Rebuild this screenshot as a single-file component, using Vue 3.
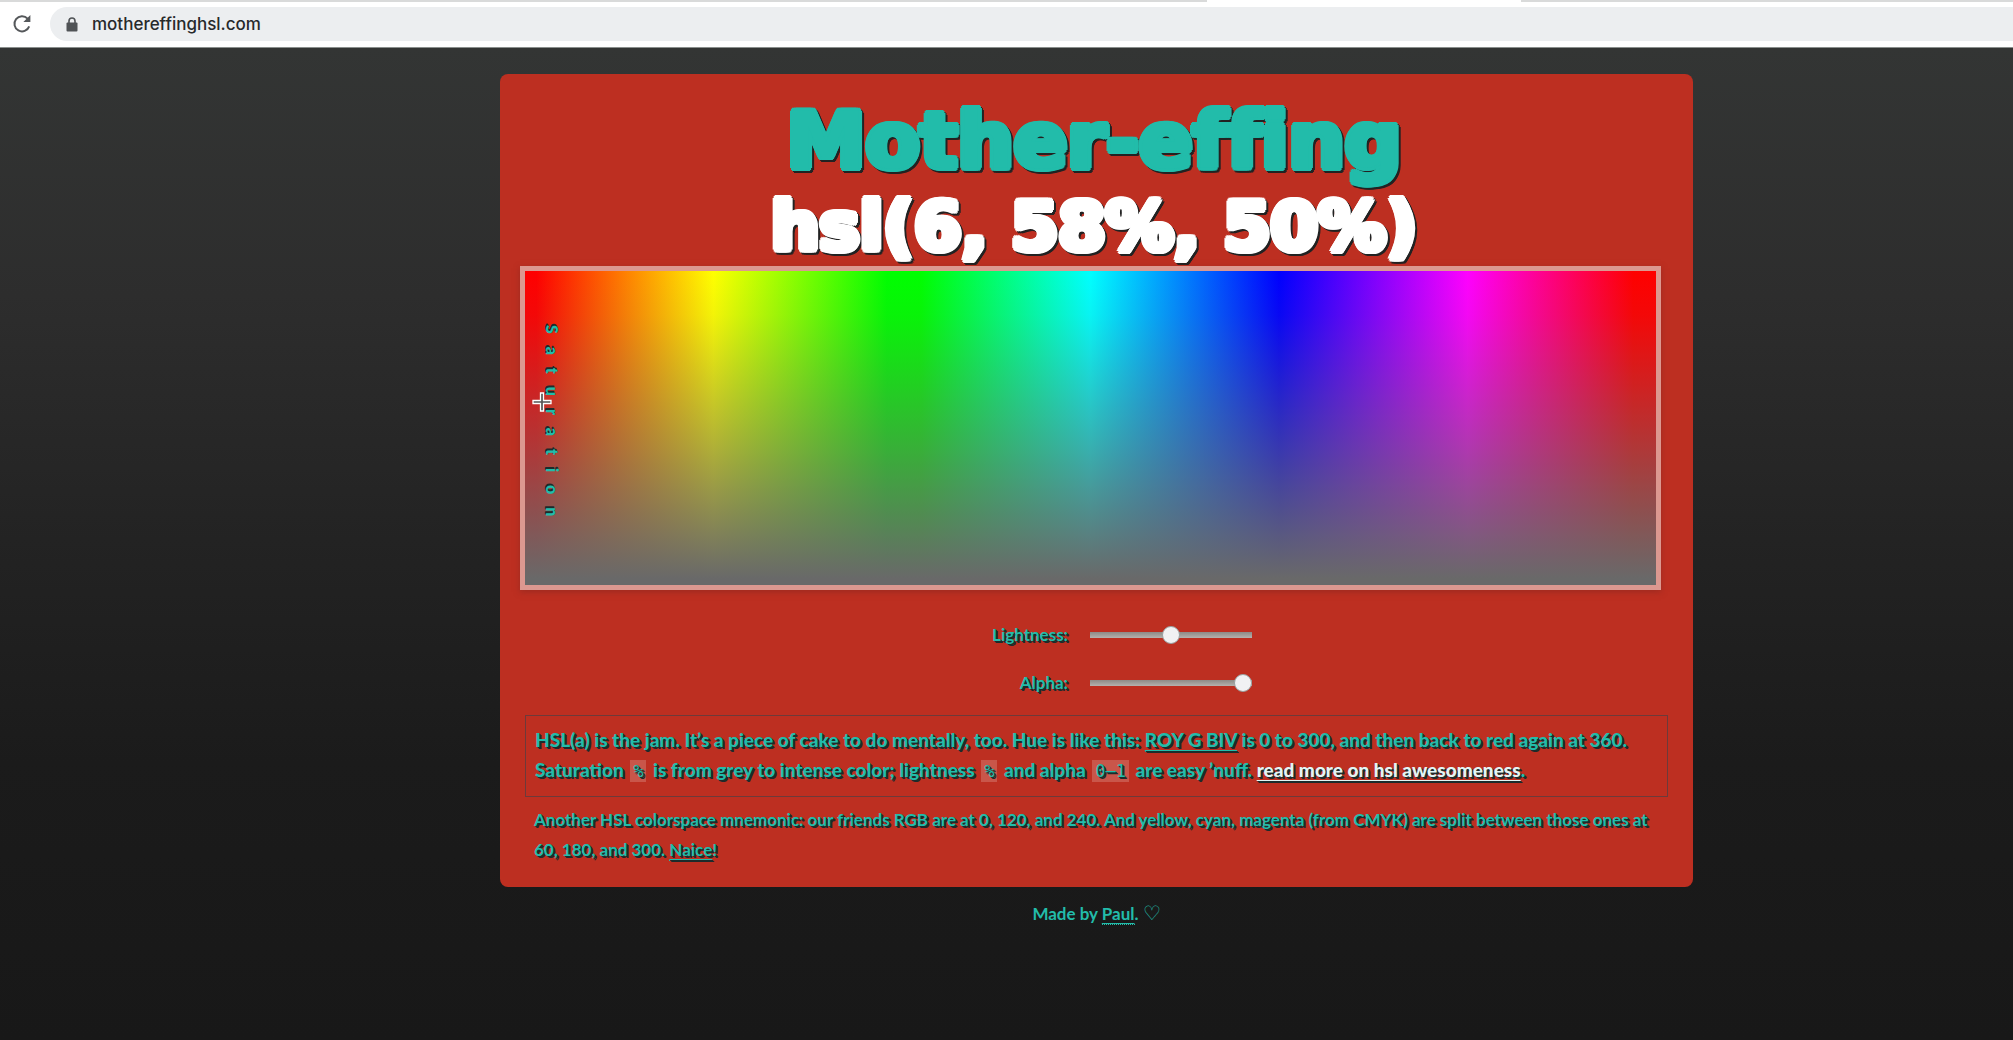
<script setup>
import { ref } from 'vue'

const lightness = ref(50)
const alpha = ref(100)
</script>

<template>
  <div class="window">
    <header class="toolbar">
      <div class="tabs"><span></span><span class="active"></span><span></span></div>
      <div class="nav">
        <button class="reload" type="button" aria-label="Reload">
          <svg width="20" height="20" viewBox="0 0 20 20" fill="none" stroke="#55585b" stroke-width="2">
            <path d="M17.2 12.4A7.6 7.6 0 1 1 15.6 4.6L17 6" />
            <path d="M18.4 1v7h-7z" fill="#55585b" stroke="none" />
          </svg>
        </button>
        <label class="address">
          <svg width="12" height="15" viewBox="0 0 12 15">
            <path d="M3 6V4a3 3 0 0 1 6 0v2" fill="none" stroke="#505356" stroke-width="1.6" />
            <rect x="0.5" y="5.5" width="11" height="9" rx="1" fill="#505356" />
          </svg>
          <input type="text" value="mothereffinghsl.com" aria-label="Address" />
        </label>
      </div>
    </header>

    <div class="page">
      <main class="card">
        <h1><span class="brand">Mother-effing</span><span class="value">hsl(6, 58%, 50%)</span></h1>

        <div class="picker">
          <span class="saturation">Saturation</span>
          <svg class="cross" width="20" height="20" viewBox="0 0 20 20">
            <path d="M8.5 1h3v7.500h7.500v3h-7.500V19h-3v-7.500H1v-3h7.500z" fill="#555" stroke="#fff" stroke-width="1.300" />
          </svg>
        </div>

        <form class="sliders">
          <label for="lightness">Lightness:</label>
          <input id="lightness" v-model="lightness" type="range" min="0" max="100" />
          <label for="alpha">Alpha:</label>
          <input id="alpha" v-model="alpha" type="range" min="0" max="100" />
        </form>

        <p class="jam">
          HSL(a) is the jam. It’s a piece of cake to do mentally, too. Hue is like this: <a class="dotted" href="#">ROY G BIV</a> is 0 to 300, and then back to red again at 360.<br />
          Saturation <code>%</code> is from grey to intense color; lightness <code>%</code> and alpha <code>0–1</code> are easy ’nuff. <a class="more" href="#">read more on hsl awesomeness</a>.
        </p>
        <p class="mnemonic">
          Another HSL colorspace mnemonic: our friends RGB are at 0, 120, and 240. And yellow, cyan, magenta (from CMYK) are split between those ones at<br />
          60, 180, and 300. <a class="dotted" href="#">Naice</a>!
        </p>
      </main>
      <footer>Made by <a class="dotted" href="#">Paul</a>. <span class="heart">♡</span></footer>
    </div>
  </div>
</template>

<style>
body {
  margin: 0;
}
</style>

<style scoped>
.window {
  min-height: 100vh;
  display: flex;
  flex-direction: column;
  overflow: hidden;
  color: #22bcaa;
  font-family: "Lato", sans-serif;
  font-weight: 700;
}
.toolbar {
  background: #fff;
  border-bottom: 1px solid #8a8f8d;
}
.tabs {
  display: grid;
  grid-template-columns: 1207fr 314fr 492fr;
  height: 2px;
}
.tabs span {
  background: #d9dada;
}
.tabs .active {
  background: #fff;
}
.nav {
  display: flex;
  align-items: center;
  gap: 18px;
  padding: 5px 0 6px 12px;
}
.reload {
  display: flex;
  padding: 0;
  border: 0;
  background: none;
}
.address {
  flex: 1;
  display: flex;
  align-items: center;
  gap: 14px;
  height: 34px;
  padding-left: 16px;
  background: #eceef0;
  border-radius: 17px 0 0 17px;
}
.address input {
  flex: 1;
  padding: 0;
  border: 0;
  outline: 0;
  background: none;
  color: #27292b;
  font: 500 17px "Inter", sans-serif;
}
.page {
  flex: 1;
  display: grid;
  grid-template-columns: 500fr 1193fr 320fr;
  align-content: start;
  padding-top: 26px;
  background: linear-gradient(#333534, #2d2d2d 25%, #222222 52%, #1b1b1b 72%, #181818);
}
.card {
  grid-column: 2;
  box-sizing: border-box;
  padding: 24px 25px 22px 20px;
  background: #bd2f21;
  border-radius: 8px;
  text-shadow: 1px 1px 0 #1d2b2b, 2px 2px 0 #1d2b2b;
}
h1 {
  margin: 0 0 -4px;
  display: flex;
  flex-direction: column;
  align-items: center;
  font-family: "DejaVu Sans", sans-serif;
  font-variant-ligatures: none;
  font-weight: 700;
  line-height: 86px;
  white-space: nowrap;
  filter: drop-shadow(2px 2px 0 #222);
}
.brand {
  font-size: 79px;
  text-shadow: 4px 0, -4px 0, 0 3px, 0 -3px, 3px 2px, -3px 2px, 3px -2px, -3px -2px, 2px 3px, -2px 3px, 2px -3px, -2px -3px;
}
.value {
  color: #fff;
  font-size: 68px;
  text-shadow: 4px 0, -4px 0, 0 3px, 0 -3px, 3px 2px, -3px 2px, 3px -2px, -3px -2px, 2px 3px, -2px 3px, 2px -3px, -2px -3px;
}
.picker {
  position: relative;
  height: 314px;
  margin-right: 7px;
  border: 5px solid #dc9890;
  box-shadow: 0 2px 6px #7d262080;
  background:
    linear-gradient(#69696900, #69696914 14%, #69696980 54%, #696969 98%),
    linear-gradient(90deg, #f00 1%, #ff0 16.67%, #0f0 32%, #0f0 35%, #0ff 50%, #00f 66.67%, #f0f 83.33%, #f00 98%);
}
.saturation {
  position: absolute;
  left: 17px;
  top: 54px;
  writing-mode: vertical-rl;
  font-size: 16px;
  font-weight: 900;
  line-height: 20px;
  letter-spacing: 13px;
  text-shadow: -1px 1px 0 #1d2b2b, -2px 1px 0 #1d2b2b;
}
.cross {
  position: absolute;
  left: 7px;
  top: 121px;
}
.sliders {
  display: grid;
  grid-template-columns: 548px 162px;
  gap: 22px;
  align-items: center;
  padding: 32px 0 19px;
  font-size: 17px;
  line-height: 26px;
}
.sliders label {
  text-align: right;
}
.sliders input {
  appearance: none;
  width: 162px;
  height: 18px;
  margin: 0;
  background: linear-gradient(#8d8a86, #b5b2ae) center / 100% 6px no-repeat;
}
.sliders input::-webkit-slider-thumb {
  appearance: none;
  width: 18px;
  height: 18px;
  border: 1px solid #99a0a0;
  border-radius: 50%;
  background: #f1f1f3;
}
p {
  margin: 0;
  line-height: 30px;
  white-space: nowrap;
}
.jam {
  margin-left: 5px;
  padding: 9px 9px 11px;
  border: 1px solid #6d3a3a;
  font-size: 19px;
  font-weight: 900;
}
.mnemonic {
  padding: 8px 14px 0;
  font-size: 17px;
}
code {
  margin: 0 2px;
  padding: 1px 3px;
  background: #ffffff30;
  font: 400 17px "DejaVu Sans Mono", monospace;
}
a {
  color: inherit;
}
.dotted {
  text-decoration: underline;
  text-decoration-thickness: 1px;
  text-underline-offset: 3px;
  border-bottom: 1px dotted currentColor;
}
.more {
  color: #e2f5f5;
  text-underline-offset: 3px;
  text-decoration-thickness: 1px;
}
footer {
  grid-column: 2;
  padding-top: 12px;
  font-size: 17px;
  line-height: 30px;
  text-align: center;
}
.heart {
  font-family: "DejaVu Sans", sans-serif;
  font-size: 20px;
  font-weight: 400;
  line-height: 20px;
}
</style>
